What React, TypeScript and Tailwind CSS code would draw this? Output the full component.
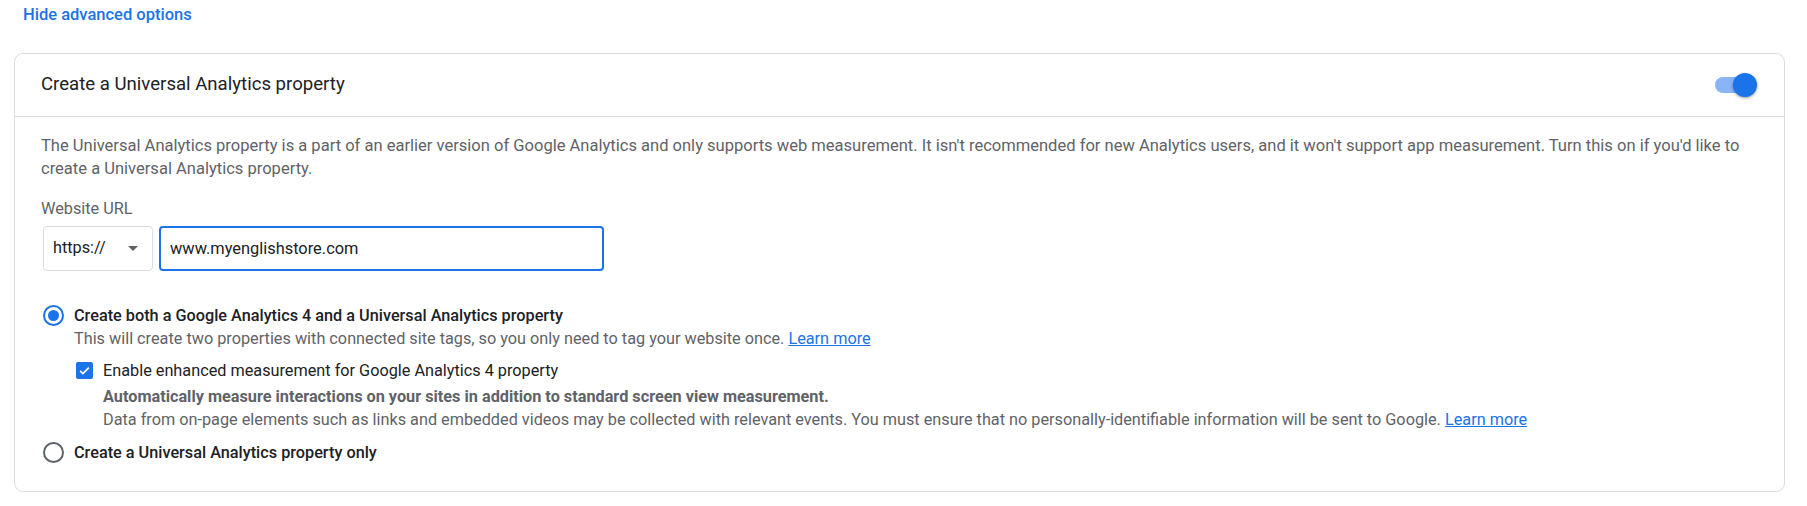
import { useState } from "react";

const FONT = "font-['Roboto','Liberation_Sans',sans-serif]";

function Radio({ checked }: { checked: boolean }) {
  return (
    <span
      className={
        "flex h-[21px] w-[21px] shrink-0 items-center justify-center rounded-full border-2 " +
        (checked ? "border-[#1a73e8]" : "border-[#5f6368]")
      }
    >
      {checked && <span className="h-[11px] w-[11px] rounded-full bg-[#1a73e8]" />}
    </span>
  );
}

function Toggle({ on }: { on: boolean }) {
  return (
    <div className="relative h-[24px] w-[42px]">
      <div className="absolute left-0 top-[4px] h-[16px] w-[38px] rounded-full bg-[#8ab4f8]" />
      <div
        className={
          "absolute top-0 h-[24px] w-[24px] rounded-full shadow-[0_1px_3px_rgba(0,0,0,0.4)] " +
          (on ? "right-0 bg-[#1a73e8]" : "left-0 bg-white")
        }
      />
    </div>
  );
}

export default function App() {
  const [url, setUrl] = useState("www.myenglishstore.com");
  const [option, setOption] = useState<"both" | "ua">("both");
  const [enhanced, setEnhanced] = useState(true);

  return (
    <div className={`h-[506px] w-[1807px] bg-white ${FONT} text-[16.25px]`}>
      <div className="h-[53px] pl-[23px] pt-[3px]">
        <a className="text-[16.5px] font-medium leading-[22px] text-[#1a73e8]">Hide advanced options</a>
      </div>

      <div className="ml-[14px] w-[1771px] rounded-[9px] border border-[#dadce0]">
        <div className="flex h-[63px] items-center justify-between border-b border-[#dadce0] pl-[26px] pr-[27px]">
          <div className="text-[18.6px] text-[#202124]">Create a Universal Analytics property</div>
          <Toggle on={true} />
        </div>

        <div className="px-[26px] pb-[27px] pt-[17px]">
          <p className="text-[16.55px] leading-[23px] text-[#5f6368]">
            The Universal Analytics property is a part of an earlier version of Google Analytics and only supports web
            measurement. It isn't recommended for new Analytics users, and it won't support app measurement. Turn this on
            if you'd like to create a Universal Analytics property.
          </p>

          <div className="mt-[17px] leading-[23px] text-[#5f6368]">Website URL</div>
          <div className="mt-[6px] flex gap-[6px] pl-[2px]">
            <div className="flex h-[45px] w-[110px] items-center justify-between rounded-[4px] border border-[#dadce0] pl-[9px] pr-[14px] text-[#202124]">
              <span>https://</span>
              <span className="h-0 w-0 border-x-[5px] border-t-[5px] border-x-transparent border-t-[#5f6368]" />
            </div>
            <input
              autoFocus
              value={url}
              onChange={(e) => setUrl(e.target.value)}
              className="h-[45px] w-[445px] rounded-[4px] border-2 border-[#1a73e8] px-[9px] text-[16.4px] text-[#202124] caret-[#202124] outline-none"
            />
          </div>

          <div className="mt-[33px] flex items-center gap-[10px] pl-[2px]" onClick={() => setOption("both")}>
            <Radio checked={option === "both"} />
            <span className="font-medium leading-[23px] text-[#202124]">
              Create both a Google Analytics 4 and a Universal Analytics property
            </span>
          </div>
          <div className="pl-[33px] leading-[23px] text-[#5f6368]">
            This will create two properties with connected site tags, so you only need to tag your website once.{" "}
            <a className="text-[#1a73e8] underline">Learn more</a>
          </div>

          <div className="mt-[9px] flex items-center gap-[10px] pl-[35px]" onClick={() => setEnhanced(!enhanced)}>
            <span className="flex h-[17px] w-[17px] items-center justify-center rounded-[2px] bg-[#1a73e8]">
              {enhanced && (
                <svg viewBox="0 0 24 24" className="h-[15px] w-[15px]" fill="none" stroke="white" strokeWidth="2.6">
                  <path d="M5 12.5l4.5 4.5L19 7.5" />
                </svg>
              )}
            </span>
            <span className="leading-[23px] text-[#202124]">Enable enhanced measurement for Google Analytics 4 property</span>
          </div>
          <div className="mt-[3px] pl-[62px] leading-[23px] text-[#5f6368]">
            <div className="font-bold">
              Automatically measure interactions on your sites in addition to standard screen view measurement.
            </div>
            <div>
              Data from on-page elements such as links and embedded videos may be collected with relevant events. You must
              ensure that no personally-identifiable information will be sent to Google.{" "}
              <a className="text-[#1a73e8] underline">Learn more</a>
            </div>
          </div>

          <div className="mt-[10px] flex items-center gap-[10px] pl-[2px]" onClick={() => setOption("ua")}>
            <Radio checked={option === "ua"} />
            <span className="font-medium leading-[23px] text-[#202124]">Create a Universal Analytics property only</span>
          </div>
        </div>
      </div>
    </div>
  );
}
